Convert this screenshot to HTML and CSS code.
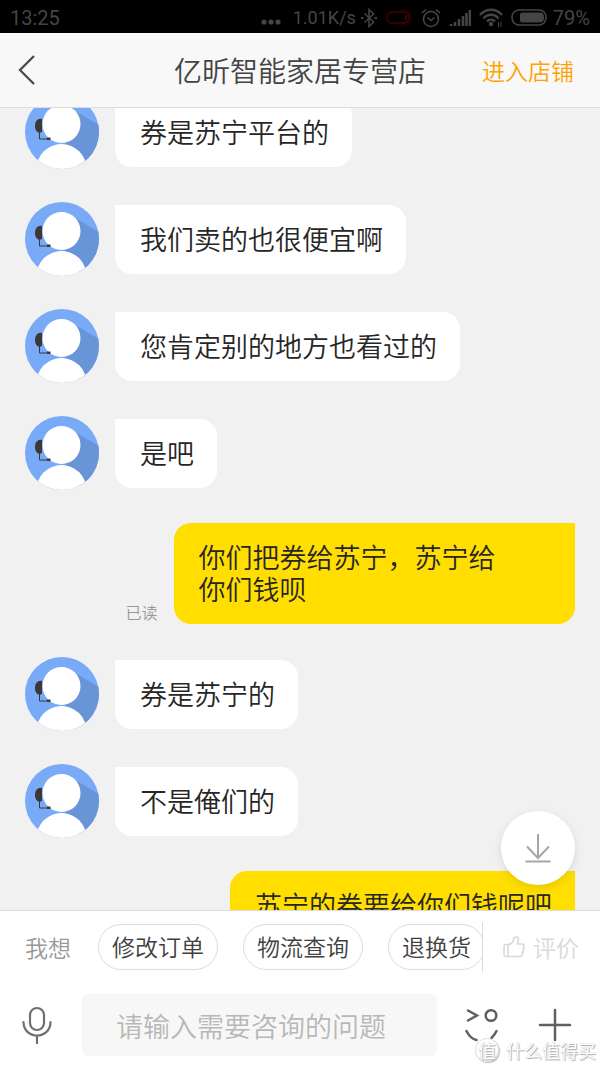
FILE: index.html
```html
<!DOCTYPE html>
<html lang="zh-CN">
<head>
<meta charset="utf-8">
<meta name="viewport" content="width=device-width, initial-scale=1">
<title>亿昕智能家居专营店</title>
<link rel="stylesheet" href="styles.css">
</head>
<body>
<svg class="defs" aria-hidden="true">
  <symbol id="agent" viewBox="0 0 74 74">
    <clipPath id="disc"><circle cx="37" cy="37" r="37"/></clipPath>
    <g clip-path="url(#disc)">
      <rect width="74" height="74" fill="#79aaf7"/>
      <path d="M50 16 74 30V74H56L40 50Z" fill="#6894d8"/>
      <circle cx="36.500" cy="74" r="25" fill="#fff"/>
      <circle cx="36.500" cy="29" r="19" fill="#fff"/>
      <path d="M17 24c-4-1-7 2-7 7s3 8 7 6z" fill="#3b3936"/>
      <path d="M14.500 36v8H24" fill="none" stroke="#3b3936"/>
      <rect x="22" y="42.500" width="3.500" height="2.500" fill="#3b3936"/>
    </g>
  </symbol>
</svg>
<div class="app">
  <div class="status">
    <span>13:25</span>
    <div class="status-right">
      <svg width="20" height="6" viewBox="0 0 20 6" class="dots"><g fill="#454545"><circle cx="3" cy="3" r="2.600"/><circle cx="10" cy="3" r="2.600"/><circle cx="17" cy="3" r="2.600"/></g></svg>
      <span class="speed">1.01K/s</span>
      <svg width="16" height="20" viewBox="0 0 16 20" fill="none" stroke="#454545" stroke-width="1.500"><path d="M3.500 5.500 12.500 14 8 18.500V1.500L12.500 6 3.500 14.500"/><path d="M0 10h2.500M13.500 10H16" stroke-width="2"/></svg>
      <svg class="red" width="27" height="20" viewBox="0 0 27 20" fill="none" stroke="#4a0000" stroke-width="1.300"><rect x="1" y="4" width="22" height="11" rx="5"/><path d="M20 7v5" stroke-width="2"/><path d="M15 2.500c5-2 10 2 10 7.500s-5 9-10 7" stroke="#280000"/></svg>
      <svg class="alarm" width="20" height="20" viewBox="0 0 20 20" fill="none" stroke="#454545" stroke-width="1.600"><circle cx="10" cy="11" r="7.500"/><path d="m6.500 9.500 3.500 3 3.500-3M1 5l4-3.500M19 5l-4-3.500"/></svg>
      <svg class="signal" width="22" height="18" viewBox="0 0 22 18" fill="none" stroke="#454545" stroke-width="2.600"><path d="M2 17v-2M6 17v-4M10 17v-7M14 17V7M17.500 17V4M21 17V1"/></svg>
      <svg class="wifi" width="24" height="20" viewBox="0 0 24 20" fill="none" stroke="#454545" stroke-width="2.400"><path d="M1 7c6-7 16-7 22 0M4.500 10.500c4-5 11-5 15 0M8 13.500c2-2.500 6-2.500 8 0"/><circle cx="12" cy="16" r="1"/><path d="M19.500 14v5M22 14v5" stroke-width="1"/></svg>
      <svg width="36" height="17" viewBox="0 0 36 17"><rect x="1" y="1" width="34" height="15" rx="7" fill="none" stroke="#454545" stroke-width="1.600"/><path d="M11 3.500H29q4 0 4 5t-4 5H11q-2 0-2-2v-6q0-2 2-2Z" fill="#454545"/></svg>
      <span class="percent">79%</span>
    </div>
  </div>
  <header class="nav">
    <button class="icon-btn back" aria-label="返回"><svg width="18" height="30" viewBox="0 0 18 30" fill="none" stroke="#4a4a4a" stroke-width="2.300"><path d="M16 1 2 15l14 14"/></svg></button>
    <h1>亿昕智能家居专营店</h1>
    <a class="shop" href="#">进入店铺</a>
  </header>
  <main class="chat">
    <div class="list">
      <div class="row"><svg class="avatar"><use href="#agent"/></svg><p class="bubble">券是苏宁平台的</p></div>
      <div class="row"><svg class="avatar"><use href="#agent"/></svg><p class="bubble">我们卖的也很便宜啊</p></div>
      <div class="row"><svg class="avatar"><use href="#agent"/></svg><p class="bubble">您肯定别的地方也看过的</p></div>
      <div class="row"><svg class="avatar"><use href="#agent"/></svg><p class="bubble">是吧</p></div>
      <div class="row sent"><span class="read">已读</span><p class="bubble wide">你们把券给苏宁，苏宁给<br>你们钱呗</p></div>
      <div class="row"><svg class="avatar"><use href="#agent"/></svg><p class="bubble">券是苏宁的</p></div>
      <div class="row"><svg class="avatar"><use href="#agent"/></svg><p class="bubble">不是俺们的</p></div>
      <div class="row sent"><p class="bubble">苏宁的券要给你们钱呢吧</p></div>
    </div>
    <button class="to-end" aria-label="滚动到底部"><svg width="26" height="29" viewBox="0 0 26 29" fill="none" stroke="#a6a6a6" stroke-width="2"><path d="M13 0v24M2 12.500 13 24l11-11.500M0.500 27.500h25"/></svg></button>
  </main>
  <footer class="panel">
    <div class="quick">
      <span class="want">我想</span>
      <div class="chips">
        <button class="chip">修改订单</button>
        <button class="chip">物流查询</button>
        <button class="chip">退换货</button>
      </div>
      <button class="rate"><svg width="22" height="22" viewBox="0 0 22 22" fill="none" stroke="#d9d9d9" stroke-width="1.600" stroke-linejoin="round"><path d="M3 8.500H5V20.500H3Q1 20.500 1 18.500V10.500Q1 8.500 3 8.500ZM5 8.500C8 8.500 10 6 10.500 3.500Q11 1 13 1q2.500 0 2.500 2.500L14.500 8H19q2 0 2 2.500l-1.500 8q-.5 2-2.500 2H5"/></svg>评价</button>
    </div>
    <div class="compose">
      <button class="icon-btn" aria-label="语音"><svg width="30" height="38" viewBox="0 0 30 38" fill="none" stroke="#707070" stroke-width="2.200" stroke-linecap="round"><rect x="8" y="2" width="14" height="22" rx="7"/><path d="M1.500 16c0 18 27 18 27 0M15 29.500V37"/></svg></button>
      <input class="field" type="text" aria-label="消息" placeholder="请输入需要咨询的问题">
      <button class="icon-btn" aria-label="表情"><svg width="34" height="34" viewBox="0 0 34 34" fill="none" stroke="#606060" stroke-width="2.500" stroke-linecap="round"><path d="m3 2.500 9 5-9 5"/><circle cx="26" cy="7.500" r="5.300"/><path d="M1.500 23c2 4 5 8 10 9M31.500 23c-1.500 3-3 5-5 7"/></svg></button>
      <button class="icon-btn" aria-label="更多"><svg width="34" height="34" viewBox="0 0 34 34" fill="none" stroke="#606060" stroke-width="2.500" stroke-linecap="round"><path d="M17 2v30M2 17h30"/></svg></button>
    </div>
  </footer>
  <div class="watermark"><span class="seal">值</span><span>什么值得买</span></div>
</div>
</body>
</html>
```

FILE: styles.css
```css
* { box-sizing: border-box; }
body { margin: 0; font-family: "Noto Sans CJK SC", sans-serif; font-weight: 350; color: #262626; }
button { font: inherit; color: inherit; background: none; border: 0; padding: 0; }
svg { display: block; flex: none; }
.defs { position: absolute; width: 0; height: 0; }
.app { position: relative; display: flex; flex-direction: column; height: 100vh; overflow: hidden; background: #f1f1f1; }

.status { display: flex; justify-content: space-between; align-items: center; flex: none; height: 33px; padding: 2px 10px 0; background: #000; color: #454545; font: 20px Roboto, sans-serif; }
.status-right { display: flex; align-items: center; }
.dots { margin-top: 8px; }
.speed { margin: 0 5px 0 12px; font-size: 18px; }
.red { margin-left: 9px; }
.alarm { margin-left: 8px; }
.signal { margin: 0 8px; }
.wifi { margin-right: 8px; }
.percent { margin-left: 6px; }

.nav { display: grid; grid-template-columns: 1fr auto 1fr; align-items: center; flex: none; height: 75px; padding: 0 26px 0 18px; background: #f8f8f8; border-bottom: 1px solid #dcdcdc; }
.nav { padding: 0 26px; }
.nav h1 { margin: 0; font-size: 28px; font-weight: inherit; color: #444; }
.back { justify-self: start; margin-left: -8px; }
.shop { justify-self: end; font-size: 23px; color: #ffa200; text-decoration: none; }
.icon-btn { display: flex; flex: none; }

.chat { position: relative; flex: 1; min-height: 0; overflow: hidden; }
.list { display: flex; flex-direction: column; gap: 33px; margin-top: -13px; padding: 0 25px; }
.row { display: flex; gap: 16px; min-height: 74px; align-items: center; }
.avatar { width: 74px; height: 74px; }
.bubble { margin: 0; padding: 18px 23px 19px 25px; border-radius: 0 17px 17px 17px; background: #fff; font-size: 27px; line-height: 32px; }
.sent { justify-content: flex-end; align-items: flex-end; }
.sent:last-child { align-items: flex-start; }
.sent .bubble { border-radius: 17px 0 17px 17px; background: #ffde00; }
.sent .wide { width: 73%; }
.read { font-size: 16px; line-height: 24px; color: #999; }
.to-end { position: absolute; right: 25px; bottom: 25px; display: flex; align-items: center; justify-content: center; width: 74px; height: 74px; border-radius: 50%; background: #fff; box-shadow: 0 3px 10px rgba(0, 0, 0, .1); }

.panel { flex: none; background: #fff; border-top: 1px solid #dcdcdc; padding-bottom: 11px; }
.quick { display: flex; align-items: center; padding: 11px 21px 22px 25px; font-size: 23px; color: #404040; }
.want { flex: none; margin-right: 27px; color: #999; }
.chips { display: flex; gap: 25px; flex: 1; min-width: 0; overflow: hidden; padding: 2px 0; border-right: 1px solid #dcdcdc; }
.chip { flex: none; height: 46px; padding: 0 13px 2px; border: 1px solid #dcdcdc; border-radius: 23px; }
.rate { display: flex; align-items: center; gap: 8px; margin-left: 20px; color: #d9d9d9; white-space: nowrap; }
.compose { display: flex; align-items: center; padding: 0 28px 0 22px; }
.compose .icon-btn:last-child { margin-left: 39px; }
.field { flex: 1; min-width: 0; height: 62px; margin: 0 28px 0 30px; padding: 0 34px; border: 0; border-radius: 6px; background: #f7f7f7; font: inherit; font-size: 27px; color: #262626; }
.field::placeholder { color: #b8b8b8; opacity: 1; }

.watermark { position: absolute; right: 4px; bottom: 4px; display: flex; align-items: center; gap: 7px; font-size: 18px; line-height: 26px; font-weight: 400; color: #fff; text-shadow: 1px 1px 1px #aaa, 0 0 1px #bbb; pointer-events: none; }
.seal { width: 24px; height: 24px; line-height: 22px; text-align: center; border: 1px solid #ddd; border-radius: 50%; background: rgba(255, 255, 255, .7); box-shadow: 1px 1px 1px #bbb; }
```
